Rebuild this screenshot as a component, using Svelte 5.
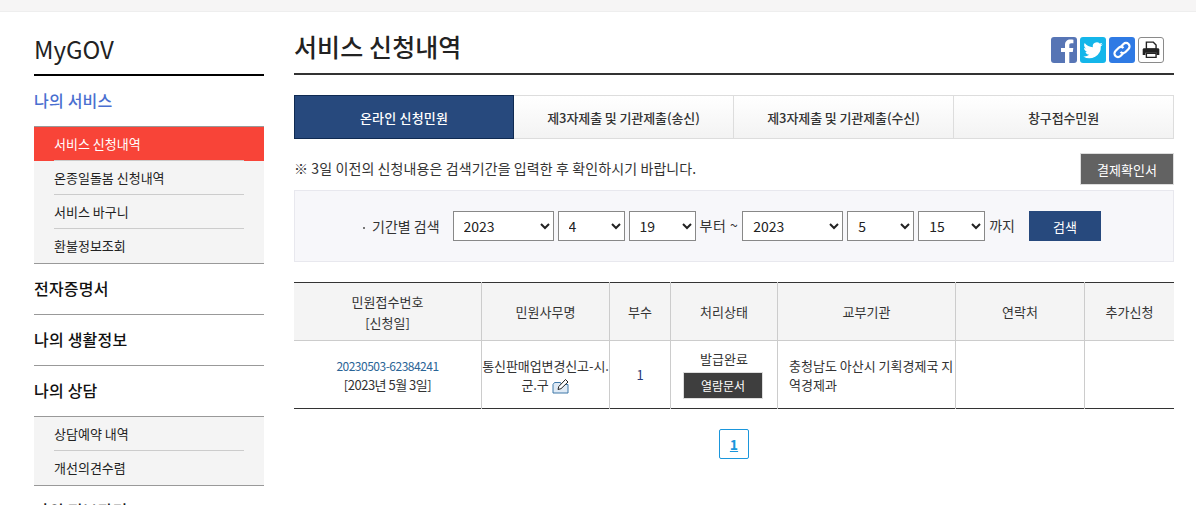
<script>
	const tabs = ['온라인 신청민원', '제3자제출 및 기관제출(송신)', '제3자제출 및 기관제출(수신)', '창구접수민원'];
	const from = [['2023', 101], ['4', 67], ['19', 67]];
	const to = [['2023', 101], ['5', 67], ['15', 67]];
</script>

<div class="page">
	<div class="topbar"></div>
	<div class="wrap">
		<aside class="side">
			<h2>MyGOV</h2>
			<h3 class="current">나의 서비스</h3>
			<ul class="sub">
				<li class="on"><span>서비스 신청내역</span></li>
				<li><span>온종일돌봄 신청내역</span></li>
				<li><span>서비스 바구니</span></li>
				<li class="last"><span>환불정보조회</span></li>
			</ul>
			<h3>전자증명서</h3>
			<h3 class="line">나의 생활정보</h3>
			<h3 class="line">나의 상담</h3>
			<ul class="sub">
				<li><span>상담예약 내역</span></li>
				<li class="last"><span>개선의견수렴</span></li>
			</ul>
			<h3>나의 정보관리</h3>
		</aside>

		<main class="main">
			<div class="head">
				<h1>서비스 신청내역</h1>
				<div class="share">
					<span class="ico fb">
						<svg viewBox="0 0 26 26" width="26" height="26"><path d="M14 26V15h-4v-4h4V8c0-3.600 2.200-5.500 5.300-5.500 1.500 0 2.700.1 3.100.2v3.600h-2.100c-1.700 0-2 .8-2 2V11h4l-.5 4h-3.500v11z" fill="#fff"/></svg>
					</span>
					<span class="ico tw">
						<svg viewBox="0 0 24 24" width="26" height="26"><path d="M21 6.600c-.7.300-1.400.5-2.100.6.800-.5 1.300-1.200 1.600-2-.7.400-1.500.7-2.300.9a3.700 3.700 0 0 0-6.300 3.400C8.800 9.300 6.100 7.800 4.300 5.600c-1 1.700-.5 3.800 1.100 4.900-.6 0-1.200-.2-1.700-.5 0 1.800 1.300 3.300 3 3.700-.5.100-1.100.2-1.700.1.500 1.500 1.800 2.500 3.500 2.600A7.400 7.400 0 0 1 3 17.900 10.500 10.500 0 0 0 19.200 8.500c.7-.5 1.300-1.100 1.800-1.900z" fill="#fff"/></svg>
					</span>
					<span class="ico ln">
						<svg viewBox="0 0 26 26" width="26" height="26" fill="none" stroke="#fff" stroke-width="2.200"><path d="M12 9.500l2.500-2.500a3.500 3.500 0 0 1 5 5l-3 3a3.500 3.500 0 0 1-5 0"/><path d="M14 16.500L11.500 19a3.500 3.500 0 0 1-5-5l3-3a3.500 3.500 0 0 1 5 0"/></svg>
					</span>
					<span class="ico pr">
						<svg viewBox="0 0 26 26" width="24" height="24"><path d="M8 4.500h7.500l3 3V12H8z" fill="#fff" stroke="#222" stroke-width="1.500"/><path d="M4 12.500c0-.8.700-1.500 1.500-1.500h15c.8 0 1.500.7 1.500 1.500V18.500h-3v-2.500H7v2.500H4z" fill="#222"/><path d="M8 16.500h10.500V21H8z" fill="#fff" stroke="#222" stroke-width="1.500"/></svg>
					</span>
				</div>
			</div>

			<div class="tabs">
				{#each tabs as t, i}
					<div class="tab" class:active={i === 0}>{t}</div>
				{/each}
			</div>

			<div class="notice">
				<p>※ 3일 이전의 신청내용은 검색기간을 입력한 후 확인하시기 바랍니다.</p>
				<button class="pay">결제확인서</button>
			</div>

			<div class="search">
				<span class="lbl">기간별 검색</span>
				{#each from as [v, w]}
					<select style="width:{w}px"><option>{v}</option></select>
				{/each}
				<span class="txt wide">부터 ~</span>
				{#each to as [v, w]}
					<select style="width:{w}px"><option>{v}</option></select>
				{/each}
				<span class="txt">까지</span>
				<button class="go">검색</button>
			</div>

			<table>
				<thead>
					<tr>
						<th style="width:187px">민원접수번호<br />[신청일]</th>
						<th style="width:127px">민원사무명</th>
						<th style="width:60px">부수</th>
						<th style="width:106px">처리상태</th>
						<th style="width:177px">교부기관</th>
						<th style="width:128px">연락처</th>
						<th>추가신청</th>
					</tr>
				</thead>
				<tbody>
					<tr>
						<td class="num"><span class="link">20230503-62384241</span><br /><span class="date">[2023년 5월 3일]</span></td>
						<td class="name">통신판매업변경신고-시.<br />군.구
							<svg class="memo" viewBox="0 0 18 16" width="18" height="16"><path d="M1 6.500l1.500-2h6l1 2h6.500v8.500H1z" fill="#dfeaf5" stroke="#3f78a8"/><path d="M6 11.500l.8-3L13.500 1.500l2.500 2.500L9 10.700z" fill="#fff" stroke="#222"/></svg>
						</td>
						<td class="count">1</td>
						<td class="state">
							<div>발급완료</div>
							<button class="view">열람문서</button>
						</td>
						<td class="org">충청남도 아산시 기획경제국 지역경제과</td>
						<td></td>
						<td></td>
					</tr>
				</tbody>
			</table>

			<div class="pager"><span>1</span></div>
		</main>
	</div>
</div>

<style>
	:global(body) { overflow: hidden; }
	.page { height: 505px; overflow: hidden; background: #fff; font-family: "Noto Sans CJK KR", "Noto Sans", sans-serif; color: #222; }
	.topbar { height: 11px; background: #f6f5f5; border-bottom: 1px solid #eee; }
	.wrap { display: flex; gap: 30px; padding: 0 22px 0 34px; }

	.side { width: 230px; flex: none; }
	.side h2 { margin: 0; height: 64px; box-sizing: border-box; padding-top: 18px; border-bottom: 2px solid #000; font-size: 24px; font-weight: 400; line-height: 37px; color: #222; }
	.side h3 { margin: 0; height: 50px; font-size: 16px; font-weight: 500; line-height: 48px; color: #111; letter-spacing: 0.2px; }
	.side h3.line { border-top: 1px solid #999; }
	.side h3.current { color: #4a6fd0; }
	.sub { list-style: none; margin: 0; padding: 0; background: #f4f4f4; border-top: 1px solid #999; border-bottom: 1px solid #999; }
	.sub li { height: 34px; padding: 0 20px; font-size: 13px; line-height: 33px; color: #222; }
	.sub li span { display: block; height: 33px; border-bottom: 1px solid #ccc; }
	.sub li.last span { border-bottom: 0; }
	.sub li.on { background: #f84438; color: #fff; }

	.main { flex: 1; min-width: 0; }
	.head { height: 63px; box-sizing: border-box; padding-top: 17px; display: flex; justify-content: space-between; border-bottom: 2px solid #333; }
	.head h1 { margin: 0; font-size: 25px; font-weight: 500; line-height: 34px; color: #222; letter-spacing: 0.1px; }
	.share { display: flex; gap: 3px; padding: 8px 10px 0 0; }
	.ico { width: 26px; height: 26px; border-radius: 3px; display: flex; align-items: center; justify-content: center; overflow: hidden; }
	.fb { background: #5775b5; }
	.tw { background: #14b6ea; }
	.ln { background: #2f7ae4; }
	.pr { background: #fff; border: 1px solid #8a8a8a; width: 24px; height: 24px; }

	.tabs { display: grid; grid-template-columns: repeat(4, 1fr); margin-top: 20px; height: 44px; }
	.tab { display: flex; align-items: center; justify-content: center; box-sizing: border-box; font-size: 13px; font-weight: 500; color: #333; border: 1px solid #ddd; border-left: 0; background: linear-gradient(#fff, #f3f3f3); letter-spacing: -0.1px; }
	.tab.active { background: #27497d; border: 1px solid #0f2a52; color: #fff; letter-spacing: 0.2px; }

	.notice { display: flex; justify-content: space-between; align-items: center; height: 32px; margin-top: 14px; }
	.notice p { margin: -2px 0 0; font-size: 14px; color: #333; letter-spacing: 0.1px; }
	.pay { width: 94px; height: 32px; background: #626262; border: 1px solid #ddd; color: #fff; font: inherit; font-size: 13px; padding: 0; }

	.search { display: flex; align-items: center; height: 72px; box-sizing: border-box; margin-top: 5px; padding-left: 77px; background: #f7f7fa; border: 1px solid #e8e8ee; gap: 4px; font-size: 14px; }
	.lbl { position: relative; margin-right: 9px; color: #333; }
	.lbl::before { content: ''; position: absolute; left: -9px; top: 11px; width: 2px; height: 2px; background: #777; }
	select { height: 30px; box-sizing: border-box; background: #fff; border: 1px solid #888; border-radius: 0; font: inherit; font-size: 14px; padding-left: 6px; color: #222; }
	.txt { color: #333; margin-top: -3px; }
	.txt.wide { letter-spacing: 0.5px; }
	.go { width: 72px; height: 30px; margin-left: 10px; background: #27497d; border: 0; color: #fff; font: inherit; font-size: 13px; padding: 0; }

	table { width: 100%; border-collapse: collapse; table-layout: fixed; margin-top: 20px; font-size: 13px; border-top: 1px solid #333; border-bottom: 1px solid #333; }
	th { height: 57px; padding: 0; background: #f4f4f4; font-weight: 400; color: #333; line-height: 21px; border-left: 1px solid #ccc; border-bottom: 1px solid #ccc; }
	td { height: 67px; padding: 0; text-align: center; line-height: 19px; border-left: 1px solid #ccc; color: #333; }
	th:first-child, td:first-child { border-left: 0; }
	.num { font-size: 12px; line-height: 19px; }
	.link { color: #2a6496; letter-spacing: -0.5px; }
	.date { font-size: 13px; letter-spacing: -0.5px; }
	.name { padding: 0; white-space: nowrap; letter-spacing: -0.1px; }
	.memo { vertical-align: -4px; }
	.count { color: #2b3a7a; }
	.state { vertical-align: top; height: 59px; padding-top: 8px; }
	.state div { line-height: 20px; margin-bottom: 3px; }
	.view { width: 80px; height: 27px; background: #3e3e3e; border: 1px solid #ddd; color: #fff; font: inherit; font-size: 12px; padding: 0; display: block; margin-left: 12px; }
	.org { text-align: left; padding-left: 11px; word-break: break-all; }

	.pager { display: flex; justify-content: center; margin-top: 20px; }
	.pager span { width: 28px; height: 28px; border: 1px solid #1a96dc; border-radius: 2px; display: flex; align-items: center; justify-content: center; color: #1a96dc; font-size: 14px; font-weight: 700; text-decoration: underline; }
</style>
